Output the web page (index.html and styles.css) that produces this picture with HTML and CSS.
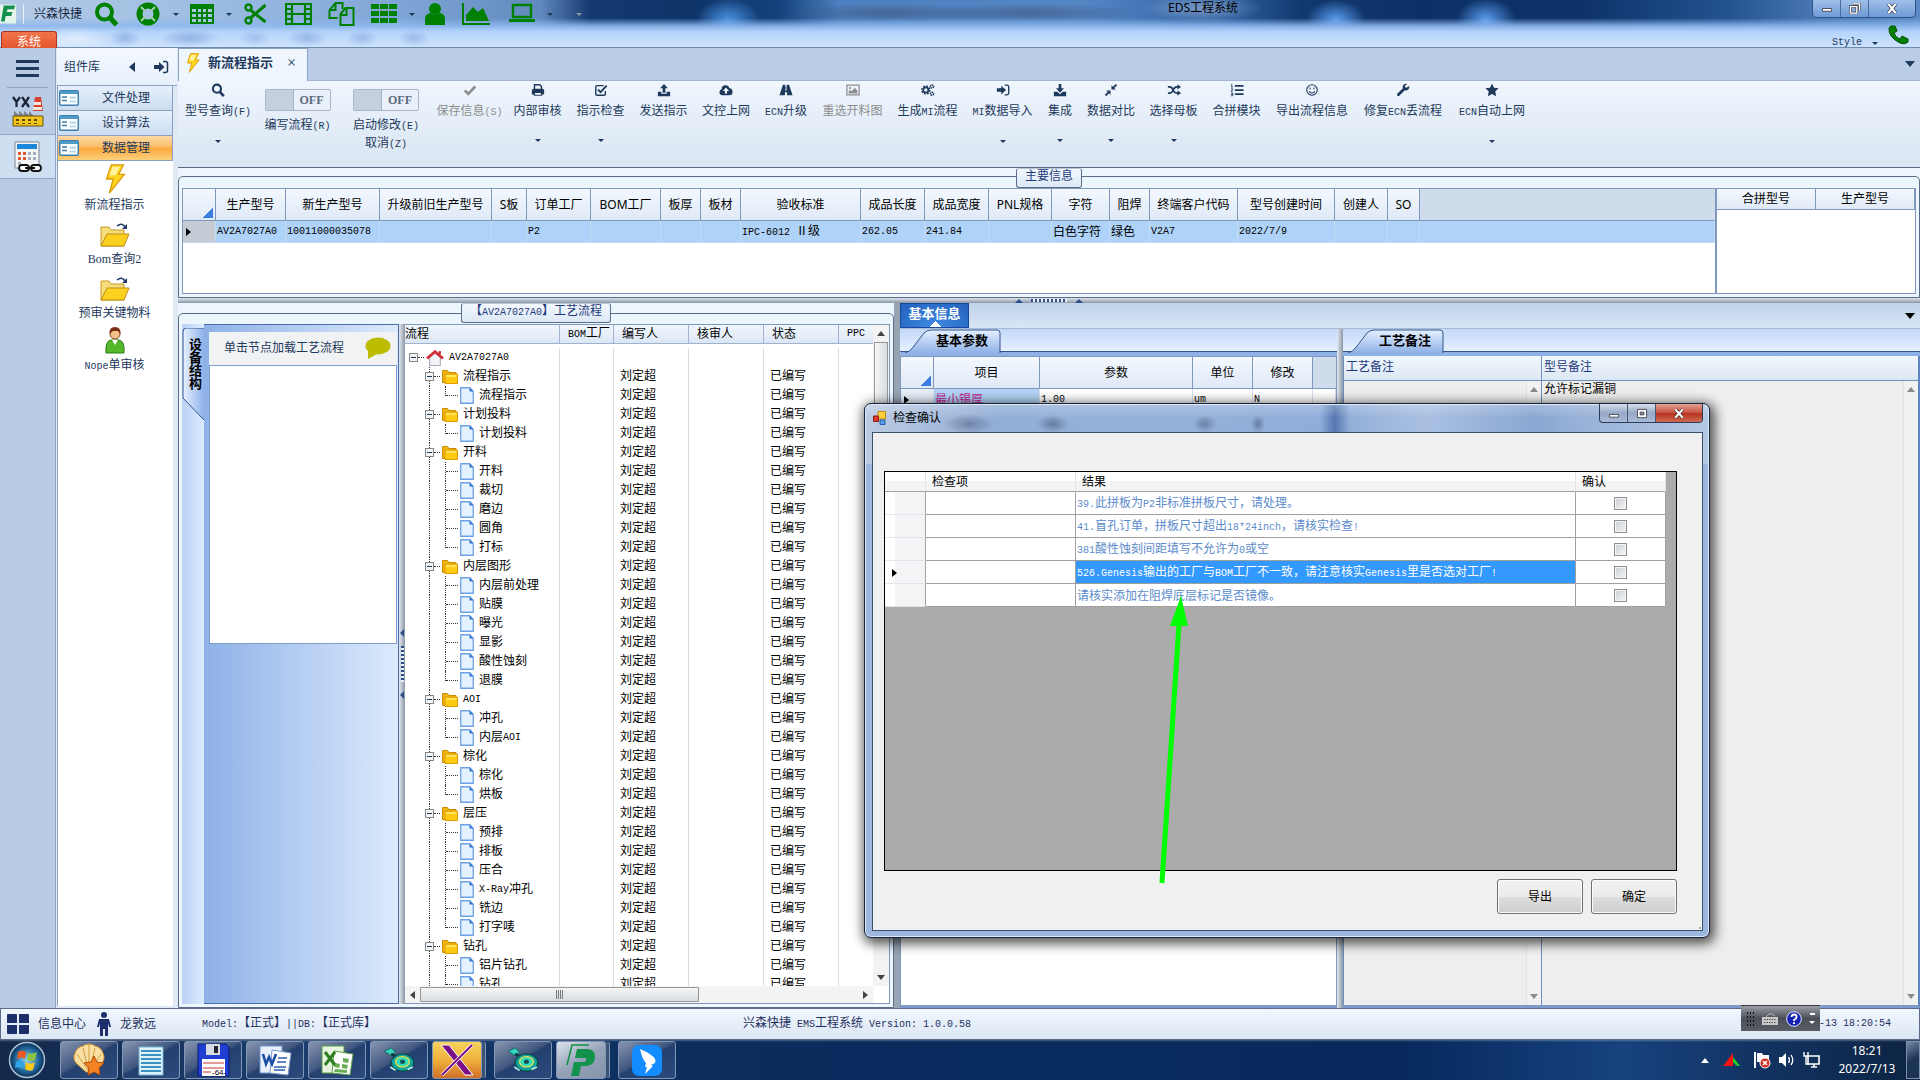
FILE: index.html
```html
<!DOCTYPE html>
<html lang="zh-CN">

<head>
  <meta charset="utf-8">
  <title>EDS工程系统</title>
  <link rel="stylesheet" href="styles.css">
</head>

<body>
  <!-- Icon shapes shared by the page -->
  <svg class="symbols" aria-hidden="true">
    <symbol id="i-search" viewBox="0 0 16 16"><circle cx="6.8" cy="6.5" r="4.6" fill="none" stroke="currentColor" stroke-width="2.4"/><path d="M10 10l4.6 5" stroke="currentColor" stroke-width="3"/></symbol>
    <symbol id="i-check" viewBox="0 0 16 16"><path d="M2 8.500l4 4L14 4" fill="none" stroke="currentColor" stroke-width="3"/></symbol>
    <symbol id="i-print" viewBox="0 0 16 16"><path d="M4 7V2h6l2 2v3" fill="none" stroke="currentColor" stroke-width="1.600"/><path d="M3 6.500h10q2 0 2 2V13h-3v-2H4v2H1V8.500q0-2 2-2z" fill="currentColor"/><path d="M4 10.800h8V14H4z" fill="#fff" stroke="currentColor" stroke-width="1.400"/></symbol>
    <symbol id="i-checksq" viewBox="0 0 16 16"><path d="M13 9v3.500q0 1.500-1.500 1.500h-8Q2 14 2 12.500v-8Q2 3 3.500 3H11" fill="none" stroke="currentColor" stroke-width="1.600"/><path d="M4.500 7.500l3 3L14.500 3" fill="none" stroke="currentColor" stroke-width="2.200"/></symbol>
    <symbol id="i-upload" viewBox="0 0 16 16"><path d="M8 1l4.500 5h-3v5h-3V6h-3z" fill="currentColor"/><path d="M1 10h4v2.200h6V10h4v5H1z" fill="currentColor"/></symbol>
    <symbol id="i-download" viewBox="0 0 16 16"><path d="M6.500 1h3v5h3L8 11 3.500 6h3z" fill="currentColor"/><path d="M1 10h4l3 2.800L11 10h4v5H1z" fill="currentColor"/></symbol>
    <symbol id="i-cloud" viewBox="0 0 16 16"><path d="M4 14Q.5 14 .5 10.500 .5 8 3 7.200 3 2.500 7.500 2.500q3.500 0 4.200 3.200Q15.500 6.500 15.500 10 15.500 14 12 14z" fill="currentColor"/><path d="M8 5l3.500 4H9.200v3H6.800V9H4.500z" fill="#f4f9fe"/></symbol>
    <symbol id="i-road" viewBox="0 0 16 16"><path d="M4.500 2h2.700v3h1.600V2h2.700L15.500 14H9.200v-3.500H6.800V14H.5z" fill="currentColor"/><path d="M7.300 6h1.400v2.500H7.300z" fill="#eef5fc"/></symbol>
    <symbol id="i-image" viewBox="0 0 16 16"><path d="M1 2.500h14v11H1z" fill="none" stroke="currentColor" stroke-width="1.400"/><circle cx="4.600" cy="5.800" r="1.300" fill="currentColor"/><path d="M3 12V9.500l2-1.500 1.500 1.500L10 5.500l3 3V12z" fill="currentColor"/></symbol>
    <symbol id="i-cogs" viewBox="0 0 16 16"><circle cx="5.500" cy="8" r="3" fill="none" stroke="currentColor" stroke-width="2"/><circle cx="5.500" cy="8" r="4.600" fill="none" stroke="currentColor" stroke-width="1.600" stroke-dasharray="2 1.600"/><circle cx="12.600" cy="4" r="1.800" fill="none" stroke="currentColor" stroke-width="1.600" stroke-dasharray="1.800 .6"/><circle cx="12.600" cy="12.300" r="1.800" fill="none" stroke="currentColor" stroke-width="1.600" stroke-dasharray="1.800 .6"/></symbol>
    <symbol id="i-signin" viewBox="0 0 16 16"><path d="M1 6h5V3l5.500 5L6 13v-3H1z" fill="currentColor"/><path d="M10 2.500h2.500Q14.500 2.500 14.500 4.500v7q0 2-2 2H10" fill="none" stroke="currentColor" stroke-width="1.500"/></symbol>
    <symbol id="i-compress" viewBox="0 0 16 16"><path d="M8.500 7.500v-5l1.700 1.700L13.500 1 15 2.500l-3.200 3.300L13.500 7.500zM7.500 8.500v5l-1.700-1.700L2.500 15 1 13.500l3.200-3.300L2.500 8.500z" fill="currentColor"/></symbol>
    <symbol id="i-random" viewBox="0 0 16 16"><path d="M1 4.500h2.500q2 0 3.500 3.500t4 3.500h1.500M1 11.500h2.500q2 0 3.500-3.500t4-3.500h1.500" fill="none" stroke="currentColor" stroke-width="1.900"/><path d="M12 1.500l4 3-4 3zM12 8.500l4 3-4 3z" fill="currentColor"/></symbol>
    <symbol id="i-list" viewBox="0 0 16 16"><path d="M5.500 3.200h10M5.500 8h10M5.500 12.800h10" stroke="currentColor" stroke-width="2"/><path d="M2 1v3.500M1 4.500h2.500M1 6.500h2v1.200L1 9.300h2.500M1 11.500h2.200v1.400H1.500h1.700v1.700H1" fill="none" stroke="currentColor" stroke-width=".9"/></symbol>
    <symbol id="i-smile" viewBox="0 0 16 16"><circle cx="8" cy="8" r="6" fill="none" stroke="currentColor" stroke-width="1.200"/><path d="M5.800 5v2.200M10.200 5v2.200M4.800 9.500q3.200 4 6.400 0" fill="none" stroke="currentColor" stroke-width="1.200"/></symbol>
    <symbol id="i-wrench" viewBox="0 0 16 16"><path d="M15 3.500L12 5.500 10.300 4.700 10.200 3 13 1.200Q9.500.2 8 2.800q-.8 1.600-.1 3.200L1.500 12.300Q.6 13.500 1.600 14.500q1.100 1 2.200.1L10 8.200q3 .9 4.600-1.400Q15.600 5.300 15 3.500z" fill="currentColor"/></symbol>
    <symbol id="i-star" viewBox="0 0 16 16"><path d="M8 .5l2.300 4.900 5.200.7-3.800 3.700 1 5.200L8 12.500 3.300 15l1-5.200L.5 6.100l5.200-.7z" fill="currentColor"/></symbol>
    <symbol id="i-bolt" viewBox="0 0 24 32"><path d="M8 1h13l-5 10h6L6 31l4-15H3z" fill="#ffd51f" stroke="#d99b0c" stroke-width="1.400"/><path d="M9.500 3h8l-5 9H6z" fill="#fff2a0"/></symbol>
    <symbol id="i-open" viewBox="0 0 30 26"><path d="M1 24V5h8l2 3h13v16z" fill="#f7dc7c" stroke="#c89a22"/><path d="M1 24L7 12h22l-5 12z" fill="#fbd01f" stroke="#c08f14"/><path d="M17 4q5-4 8 1" fill="none" stroke="#243b66" stroke-width="1.600"/><path d="M27 2v5h-5z" fill="#243b66"/></symbol>
    <symbol id="i-form" viewBox="0 0 20 16"><rect x=".75" y=".75" width="18.500" height="14.500" rx="1" fill="#fff" stroke="#3c7fae" stroke-width="1.500"/><path d="M1 1h18v3H1z" fill="#4f9bc8"/><path d="M3 7h5M3 10.500h5" stroke="#3c7fae" stroke-width="1.600"/><path d="M10.500 6.500h6.500v2.300h-6.500zM10.500 10.500h6.500v2h-6.500z" fill="#b9d9ea"/></symbol>
    <symbol id="i-folder" viewBox="0 0 16 15"><path d="M.5 13.500V1.500h5l1.500 2h7v10z" fill="#f0b410" stroke="#c98c07"/><path d="M3 5h12.500v9.500H3z" fill="#ffcb12" stroke="#e09a08"/><path d="M4 6h10.500v2H4z" fill="#ffe45c"/></symbol>
    <symbol id="i-doc" viewBox="0 0 14 17"><path d="M.75.75h9l3.500 3.500v12H.75z" fill="#e4f1ff" stroke="#6ea2e6" stroke-width="1.300"/><path d="M9.500.5l4 4h-4z" fill="#2f74cf"/></symbol>
    <symbol id="i-home" viewBox="0 0 16 15"><path d="M3 7l5-4.500L13 7v7.500H3z" fill="#f3f4f8" stroke="#a5a9b8"/><path d="M.5 8L8 1.500 15.500 8" fill="none" stroke="#d3303a" stroke-width="2.600"/><path d="M11.500 1h2v3h-2z" fill="#b5232c"/></symbol>
    <symbol id="i-person" viewBox="0 0 20 28"><path d="M1 27q-1-12 5-13h8q6 1 5 13z" fill="#55b82a" stroke="#2c7d12"/><path d="M7 14l3 5 3-5z" fill="#fff"/><circle cx="10" cy="8" r="5" fill="#f3c08c" stroke="#8b4a1f"/><path d="M4.500 8Q4 1 10 1t5.500 7L13 5H8z" fill="#7b2d14"/></symbol>
    <symbol id="i-moth" viewBox="0 0 36 30"><path d="M1 5l8-4 5 5-5 4z" fill="#35d6bd" stroke="#0a5b58"/><path d="M9 8l9 5" stroke="#134" stroke-width="3"/><ellipse cx="22" cy="18" rx="13" ry="10" fill="#14a39a" stroke="#0a4c4c" stroke-width="1.500"/><ellipse cx="22" cy="17" rx="8" ry="6" fill="#36dcb8" stroke="#e8e04e" stroke-width="1.500"/><ellipse cx="22" cy="17" rx="3" ry="2.500" fill="#10535a"/><path d="M8 23l6 4M28 26l6-3" stroke="#bfe9ee" stroke-width="2"/></symbol>
  </svg>

  <header class="titlebar">
    <div class="quick">
      <svg class="logo" viewBox="0 0 18 20"><path d="M0 0h17v20H0z" fill="#e4f3ea"/><path d="M4 1h12l-1 4H8L7 8h6l-1 4H6l-1 6H1z" fill="#12904e"/></svg>
      <span class="sep"></span>
      <span class="brand">兴森快捷</span>
      <svg class="q q1" viewBox="0 0 24 24"><circle cx="10" cy="10" r="7.500" fill="none" stroke="#008000" stroke-width="4"/><path d="M15 15l7 8" stroke="#008000" stroke-width="5"/></svg>
      <svg class="q q2" viewBox="0 0 26 24"><circle cx="13" cy="12" r="8.500" fill="none" stroke="#008000" stroke-width="6"/><path d="M6 5l4 4M20 5l-4 4M6 19l4-4M20 19l-4-4" stroke="#a8ceae" stroke-width="2"/></svg>
      <i class="caret"></i>
      <svg class="q q3" viewBox="0 0 24 24"><path d="M0 2h24v20H0z" fill="#008000"/><path d="M2 7h4v3H2zM8 7h3v3H8zM13 7h3v3h-3zM18 7h4v3h-4zM2 12h4v3H2zM8 12h3v3H8zM13 12h3v3h-3zM18 12h4v3h-4zM2 17h4v3H2zM8 17h3v3H8zM13 17h3v3h-3zM18 17h4v3h-4z" fill="#a9c8e4"/></svg>
      <i class="caret"></i>
      <svg class="q q4" viewBox="0 0 22 24"><path d="M6 8L21 20M6 16L21 3" stroke="#008000" stroke-width="3"/><circle cx="4" cy="5.500" r="3" fill="none" stroke="#008000" stroke-width="2.400"/><circle cx="4" cy="18.500" r="3" fill="none" stroke="#008000" stroke-width="2.400"/></svg>
      <svg class="q q5" viewBox="0 0 27 24"><path d="M1 2h25v20H1zM7 2v20M20 2v20M7 12h13M1 7h6M1 12h6M1 17h6M20 7h6M20 12h6M20 17h6" fill="none" stroke="#008000" stroke-width="2.200"/></svg>
      <svg class="q q6" viewBox="0 0 26 24"><path d="M9 16H1V8l6-7h7v6M7 1v7H1M12 23V12l5-6h8v17zM18 6v7h-6" fill="none" stroke="#008000" stroke-width="2"/></svg>
      <svg class="q q7" viewBox="0 0 26 24"><path d="M0 2h8v5H0zM9 2h8v5H9zM18 2h8v5h-8zM0 9h8v5H0zM9 9h8v5H9zM18 9h8v5h-8zM0 16h8v5H0zM9 16h8v5H9zM18 16h8v5h-8z" fill="#008000"/></svg>
      <i class="caret"></i>
      <svg class="q q8" viewBox="0 0 22 24"><circle cx="11" cy="7" r="6" fill="#008000"/><path d="M1 23V17q0-5 5-6 5 4 10 0 5 1 5 6v6z" fill="#008000"/></svg>
      <svg class="q q9" viewBox="0 0 29 24"><path d="M1 1v21h27" fill="none" stroke="#008000" stroke-width="2"/><path d="M4 19v-6l7-8 5 5 5-4 6 13z" fill="#008000"/></svg>
      <svg class="q q10" viewBox="0 0 26 24"><path d="M4 3h18v12H4z" fill="none" stroke="#008000" stroke-width="2.400"/><path d="M0 17h26v3H0z" fill="#008000"/></svg>
      <i class="caret"></i>
      <i class="caret more"></i>
    </div>
    <h1 class="app-title">EDS工程系统</h1>
    <div class="window-buttons">
      <button type="button" aria-label="最小化"><svg viewBox="0 0 12 12"><path d="M1 6h10v3H1z" fill="#fff" stroke="#445"/></svg></button>
      <button type="button" aria-label="还原"><svg viewBox="0 0 12 12"><path d="M4 1h7v7M1 4h7v7H1z" fill="none" stroke="#445" stroke-width="3"/><path d="M4 1h7v7M1 4h7v7H1z" fill="none" stroke="#fff" stroke-width="1.500"/></svg></button>
      <button type="button" class="wide" aria-label="关闭"><svg viewBox="0 0 12 12"><path d="M2 1l8 10M10 1L2 11" stroke="#445" stroke-width="4"/><path d="M2 1l8 10M10 1L2 11" stroke="#fff" stroke-width="2.400"/></svg></button>
    </div>
    <button type="button" class="system-tab">系统</button>
    <div class="style-menu">
      <span class="lat">Style</span><i class="caret"></i>
      <svg width="22" height="20" viewBox="0 0 22 20"><path d="M3 1l4 0 2 5-3 2q2 5 6 6l2-3 6 3v3q-3 3-8 1Q0 12 1 3z" fill="#008000" stroke="#024d02"/></svg>
    </div>
  </header>

  <div class="app">
    <nav class="rail">
      <button type="button" class="burger" aria-label="菜单"><i></i><i></i><i></i></button>
      <button type="button" class="rail-item active" aria-label="YX">
        <svg width="32" height="32" viewBox="0 0 32 32"><path d="M21 16l2-14h6l2 14z" fill="#d8402f"/><path d="M22 7h7v3h-7zM21 12h9v3h-9z" fill="#f4e6e0"/><path d="M2 22v-6l5 4v-4l5 4v-4l5 4v-4l4 4v2z" fill="#7a828e"/><path d="M1 21h30v10H1z" fill="#f2c31a" stroke="#6b5310"/><path d="M4 24h3v2H4zM10 24h3v2h-3zM16 24h3v2h-3zM22 24h3v2h-3zM4 28h3v1H4zM10 28h3v1h-3zM16 28h3v1h-3zM22 28h3v1h-3z" fill="#5d4706"/><path d="M1 2l3.500 5L8 2M4.500 7v5M10 2l7 10M17 2l-7 10" fill="none" stroke="#1a2233" stroke-width="2.200"/></svg>
      </button>
      <button type="button" class="rail-item" aria-label="计算">
        <svg width="30" height="32" viewBox="0 0 30 32"><path d="M2 1h24v26H2z" fill="#f4f5f7" stroke="#7d8695"/><path d="M4 3h20v5H4z" fill="#1d86d8"/><path d="M5 11h3v3H5zM10 11h3v3h-3zM5 16h3v3H5zM10 16h3v3h-3z" fill="#e2582b"/><path d="M15 11h3v3h-3zM20 11h3v3h-3zM15 16h3v3h-3zM20 16h3v3h-3zM5 21h3v3H5z" fill="#a7b0bf"/><rect x="6" y="24" width="10" height="6" rx="3" fill="#fff" stroke="#111" stroke-width="1.800"/><rect x="18" y="24" width="10" height="6" rx="3" fill="#fff" stroke="#111" stroke-width="1.800"/><path d="M12 27h10" stroke="#111" stroke-width="2"/></svg>
      </button>
    </nav>

    <aside class="library">
      <div class="library-head"><span>组件库</span><i class="back"></i><svg width="16" height="16"><use href="#i-signin"/></svg></div>
      <button type="button" class="cat"><svg width="20" height="16"><use href="#i-form"/></svg><span>文件处理</span></button>
      <button type="button" class="cat"><svg width="20" height="16"><use href="#i-form"/></svg><span>设计算法</span></button>
      <button type="button" class="cat on"><svg width="20" height="16"><use href="#i-form"/></svg><span>数据管理</span></button>
      <div class="library-list">
        <a href="#"><svg width="24" height="30"><use href="#i-bolt"/></svg>新流程指示</a>
        <a href="#"><svg width="30" height="26"><use href="#i-open"/></svg>Bom查询2</a>
        <a href="#"><svg width="30" height="26"><use href="#i-open"/></svg>预审关键物料</a>
        <a href="#"><svg width="22" height="28"><use href="#i-person"/></svg><span><span class="lat">Nope</span>单审核</span></a>
      </div>
    </aside>

    <main class="main">
      <div class="doc-tabs">
        <div class="doc-tab"><svg width="16" height="20"><use href="#i-bolt"/></svg><b>新流程指示</b><button type="button" aria-label="关闭">×</button></div>
        <i class="drop"></i>
      </div>

      <div class="toolbar">
        <button type="button" class="tool"><svg><use href="#i-search"/></svg><span>型号查询<span class="lat">(F)</span></span><i class="caret"></i></button>
        <label class="tool switch"><input type="checkbox"><span class="track">OFF</span><span>编写流程<span class="lat">(R)</span></span></label>
        <label class="tool switch"><input type="checkbox"><span class="track">OFF</span><span>启动修改<span class="lat">(E)</span></span><span>取消<span class="lat">(Z)</span></span></label>
        <button type="button" class="tool" disabled><svg><use href="#i-check"/></svg><span>保存信息<span class="lat">(S)</span></span></button>
        <button type="button" class="tool"><svg><use href="#i-print"/></svg><span>内部审核</span><i class="caret"></i></button>
        <button type="button" class="tool"><svg><use href="#i-checksq"/></svg><span>指示检查</span><i class="caret"></i></button>
        <button type="button" class="tool"><svg><use href="#i-upload"/></svg><span>发送指示</span></button>
        <button type="button" class="tool"><svg><use href="#i-cloud"/></svg><span>文控上网</span></button>
        <button type="button" class="tool"><svg><use href="#i-road"/></svg><span><span class="lat">ECN</span>升级</span></button>
        <button type="button" class="tool" disabled><svg><use href="#i-image"/></svg><span>重选开料图</span></button>
        <button type="button" class="tool"><svg><use href="#i-cogs"/></svg><span>生成<span class="lat">MI</span>流程</span></button>
        <button type="button" class="tool"><svg><use href="#i-signin"/></svg><span><span class="lat">MI</span>数据导入</span><i class="caret"></i></button>
        <button type="button" class="tool"><svg><use href="#i-download"/></svg><span>集成</span><i class="caret"></i></button>
        <button type="button" class="tool"><svg><use href="#i-compress"/></svg><span>数据对比</span><i class="caret"></i></button>
        <button type="button" class="tool"><svg><use href="#i-random"/></svg><span>选择母板</span><i class="caret"></i></button>
        <button type="button" class="tool"><svg><use href="#i-list"/></svg><span>合拼模块</span></button>
        <button type="button" class="tool"><svg><use href="#i-smile"/></svg><span>导出流程信息</span></button>
        <button type="button" class="tool"><svg><use href="#i-wrench"/></svg><span>修复<span class="lat">ECN</span>丢流程</span></button>
        <button type="button" class="tool"><svg><use href="#i-star"/></svg><span><span class="lat">ECN</span>自动上网</span><i class="caret"></i></button>
      </div>

      <section class="group info">
        <h2 class="group-label">主要信息</h2>
        <div class="group-box">
          <div class="info-left">
            <table class="grid">
              <colgroup><col class="w33"><col class="w70"><col class="w94"><col class="w112"><col class="w35"><col class="w64"><col class="w70"><col class="w40"><col class="w40"><col class="w120"><col class="w64"><col class="w64"><col class="w63"><col class="w58"><col class="w40"><col class="w88"><col class="w97"><col class="w53"><col class="w32"><col></colgroup>
              <thead>
                <tr><th class="corner"></th><th>生产型号</th><th>新生产型号</th><th>升级前旧生产型号</th><th>S板</th><th>订单工厂</th><th>BOM工厂</th><th>板厚</th><th>板材</th><th>验收标准</th><th>成品长度</th><th>成品宽度</th><th>PNL规格</th><th>字符</th><th>阻焊</th><th>终端客户代码</th><th>型号创建时间</th><th>创建人</th><th>SO</th><th class="rest"></th></tr>
              </thead>
              <tbody>
                <tr class="picked"><td class="mark"><i></i></td><td class="lat">AV2A7027A0</td><td class="lat">10011000035078</td><td></td><td></td><td class="lat">P2</td><td></td><td></td><td></td><td><span class="lat">IPC-6012 </span>Ⅱ级</td><td class="lat">262.05</td><td class="lat">241.84</td><td></td><td>白色字符</td><td>绿色</td><td class="lat">V2A7</td><td class="lat">2022/7/9</td><td></td><td></td><td></td></tr>
              </tbody>
            </table>
          </div>
          <div class="info-right">
            <table class="grid short">
              <thead><tr><th>合拼型号</th><th>生产型号</th></tr></thead>
            </table>
          </div>
        </div>
      </section>

      <div class="hsplit"><i class="up"></i><i class="dots"></i><i class="up"></i></div>

      <div class="lower">
        <section class="group process">
          <h2 class="group-label">【<span class="lat">AV2A7027A0</span>】工艺流程</h2>
          <div class="group-box">
            <div class="side-tab">
              <svg viewBox="0 0 22 94" preserveAspectRatio="none"><defs><linearGradient id="sideFill" x1="0" x2="1" y1="0" y2="0"><stop offset="0" stop-color="#e8f1ff"/><stop offset="1" stop-color="#8fb2e8"/></linearGradient></defs><path d="M22 0H4Q1 0 1 4v66l21 22" fill="url(#sideFill)" stroke="#33548f"/></svg>
              <b>设备结构</b>
            </div>
            <div class="device">
              <button type="button" class="hint">单击节点加载工艺流程<svg width="26" height="22" viewBox="0 0 26 22"><ellipse cx="13" cy="9" rx="12.500" ry="8.500" fill="#bcbc00"/><path d="M3 14l0 8 9-5z" fill="#bcbc00"/></svg></button>
              <div class="device-list"></div>
            </div>
            <div class="vsplit"><i class="left"></i><i class="dots"></i><i class="left"></i></div>
            <div class="tree">
              <div class="tree-view">
                <table>
                  <colgroup><col class="w155"><col class="w54"><col class="w75"><col class="w75"><col class="w75"><col></colgroup>
                  <thead><tr><th>流程</th><th><span class="lat">BOM</span>工厂</th><th>编写人</th><th>核审人</th><th>状态</th><th class="lat">PPC</th></tr></thead>
                  <tbody id="process-rows"></tbody>
                </table>
              </div>
              <div class="scroll-y"><i class="tri up"></i><i class="thumb"></i><i class="tri down"></i></div>
              <div class="scroll-x"><i class="tri prev"></i><i class="thumb"></i><i class="tri next"></i></div>
            </div>
          </div>
        </section>

        <section class="details">
          <div class="detail-tabs"><button type="button">基本信息</button><i class="drop"></i></div>
          <div class="detail-body">
            <div class="params">
              <div class="slant"><svg viewBox="0 0 96 24"><use href="#slant"/></svg><b>基本参数</b></div>
              <div class="sheet">
                <table class="grid">
                  <colgroup><col class="w33"><col class="w106"><col class="w153"><col class="w60"><col class="w60"><col></colgroup>
                  <thead><tr><th class="corner"></th><th>项目</th><th>参数</th><th>单位</th><th>修改</th><th class="rest"></th></tr></thead>
                  <tbody>
                    <tr><td class="mark"><i></i></td><td class="item">最小锡厚</td><td class="lat">1.00</td><td class="lat unit">um</td><td class="lat">N</td><td></td></tr>
                  </tbody>
                </table>
              </div>
            </div>
            <div class="vsplit thin"></div>
            <div class="notes">
              <div class="slant"><svg viewBox="0 0 96 24"><defs><linearGradient id="tabFill" x1="0" x2="0" y1="0" y2="1"><stop offset="0" stop-color="#e6f0ff"/><stop offset="1" stop-color="#8eb1e7"/></linearGradient><path id="slant" d="M0 24Q5 23 9 17L19 4Q22 1 26 1H92Q95 1 95 4V24" fill="url(#tabFill)" stroke="#33548f"/></defs><use href="#slant"/></svg><b>工艺备注</b></div>
              <div class="note-grid">
                <div class="note"><label for="note-process">工艺备注</label><div class="note-body"><textarea id="note-process"></textarea><div class="scroll-y off"><i class="tri up"></i><i class="tri down"></i></div></div></div>
                <div class="note"><label for="note-model">型号备注</label><div class="note-body"><textarea id="note-model">允许标记漏铜</textarea><div class="scroll-y off"><i class="tri up"></i><i class="tri down"></i></div></div></div>
              </div>
            </div>
          </div>
        </section>
      </div>
    </main>
  </div>

  <footer class="statusbar">
    <svg width="22" height="20" viewBox="0 0 22 20"><path d="M0 1q0-1 1-1h8q1 0 1 1v8H0zM12 0h9q1 0 1 1v8H12zM0 11h10v9H1q-1 0-1-1zM12 11h10v8q0 1-1 1h-9z" fill="#1c2f6b"/></svg>
    <span class="center-name">信息中心</span>
    <svg width="16" height="24" viewBox="0 0 16 24"><circle cx="8" cy="3" r="3" fill="#1c2f6b"/><path d="M3 7h10l2 8h-2l-1-4v13H9v-7H7v7H4V11l-1 4H1z" fill="#1c2f6b"/></svg>
    <span class="user">龙敦远</span>
    <span class="model"><span class="lat">Model:</span>【正式】<span class="lat">||DB:</span>【正式库】</span>
    <span class="version">兴森快捷<span class="lat"> EMS</span>工程系统<span class="lat"> Version: 1.0.0.58</span></span>
    <span class="clock lat">-13 18:20:54</span>
  </footer>

  <div class="taskbar">
    <button type="button" class="orb" aria-label="开始"><svg width="40" height="38" viewBox="0 0 40 38"><defs><radialGradient id="orb"><stop offset="0" stop-color="#8ed8f5"/><stop offset=".7" stop-color="#1e6296"/><stop offset="1" stop-color="#0b2c50"/></radialGradient></defs><circle cx="20" cy="19" r="17.500" fill="url(#orb)" stroke="#a8bfd2" stroke-width="1.500"/><path d="M11 11q4-3 8 0l-1 7q-4-3-8 0z" fill="#ee5a24"/><path d="M21 12q4 2 9-1l-2 8q-4 2-8 0z" fill="#8cc63e"/><path d="M9 21q4-3 8 0l-1 7q-4-3-8-1z" fill="#2fa4e7"/><path d="M19 21q4 3 9 0l-2 8q-4 2-8-1z" fill="#fbc91e"/></svg></button>
    <button type="button" class="task" aria-label="贝壳"><svg viewBox="0 0 36 34"><path d="M18 1q4 0 6 2 6 1 8 7 3 6-2 11l-9 8h-6l-9-8Q1 16 4 10q2-6 8-7 2-2 6-2z" fill="#f8dfa4" stroke="#c98b2b"/><path d="M18 29L6 11M18 29L12 5M18 29V2M18 29L24 5M18 29l12-18" stroke="#d79b3d"/><path d="M23 13l3 6 7 1-5 5 1 7-6-3-6 3 1-7-5-5 7-1z" fill="#f28222" stroke="#b24d0a"/></svg></button>
    <button type="button" class="task" aria-label="记事本"><svg viewBox="0 0 36 34"><path d="M6 4h24v28H6z" fill="#dff2fb" stroke="#6fb4d4"/><path d="M8 8h20M8 12h20M8 16h20M8 20h20M8 24h20M8 28h20" stroke="#3d94c4" stroke-width="2"/></svg></button>
    <button type="button" class="task" aria-label="TC"><svg viewBox="0 0 36 34"><path d="M3 1h28l3 3v29H3z" fill="#1f3fd0" stroke="#0a1b77"/><path d="M11 1h14v11H11z" fill="#d7dbe4"/><path d="M19 3h4v7h-4z" fill="#223"/><path d="M7 16h23v17H7z" fill="#fff"/><path d="M8 20h21M8 25h21M8 29h8" stroke="#c33"/><text x="17" y="32" font-size="8" font-family="Liberation Sans">-64-</text></svg></button>
    <button type="button" class="task" aria-label="Word"><svg viewBox="0 0 36 34"><path d="M3 3h22v27H3z" fill="#e8effa" stroke="#6f94cf"/><path d="M15 7l19 3-3 22-18-2z" fill="#fff" stroke="#7d9ccc"/><path d="M6 11l3 10 3-7 3 7 4-10" fill="none" stroke="#1b4fa4" stroke-width="2.600"/><path d="M21 15h9M20 19h9M17 24h12M17 27h11" stroke="#2b5fae" stroke-width="1.500"/></svg></button>
    <button type="button" class="task" aria-label="Excel"><svg viewBox="0 0 36 34"><path d="M3 3h22v27H3z" fill="#e7f4e2" stroke="#5ba045"/><path d="M15 8l19 3-3 21-18-2z" fill="#fff" stroke="#5ba045"/><path d="M16 20l5 1-1 4-5-1zM23 21l6 1-1 4-5-1zM24 15l6 1-1 4-5-1zM16 26l12 1v3l-13-1z" fill="#69ad55"/><path d="M6 9l10 13M16 9L6 22" stroke="#2c7d1f" stroke-width="3"/></svg></button>
    <button type="button" class="task small" aria-label="Genesis"><svg><use href="#i-moth"/></svg></button>
    <button type="button" class="task gold stack" aria-label="X"><svg viewBox="0 0 36 34"><path d="M2 2h8l24 30h-8z" fill="#7b0f86" stroke="#fff"/><path d="M33 2L3 32" stroke="#fff" stroke-width="3.500"/><path d="M33 2L3 32" stroke="#7b0f86" stroke-width="2"/></svg></button>
    <button type="button" class="task small" aria-label="Genesis"><svg><use href="#i-moth"/></svg></button>
    <button type="button" class="task light stack" aria-label="EDS"><svg viewBox="0 0 36 34"><path d="M4 22L9 2h17" fill="none" stroke="#0f8f46" stroke-width="1.500"/><path d="M14 6h11q8 1 7 9-1 8-10 8h-4l-2 10H8l3-14h11q2-2 1-4H12z" fill="#12924a"/></svg></button>
    <button type="button" class="task" aria-label="飞鸟"><svg viewBox="0 0 36 34"><rect x="3" y="2" width="30" height="31" rx="7" fill="#128cff"/><path d="M11 6q12 5 15 10 1 2 0 4l-4 2 2 1-8 8 2-7h-2l1-4q-4-4-6-14z" fill="#fff"/></svg></button>

    <div class="tray">
      <i class="tri up"></i>
      <svg width="18" height="16" viewBox="0 0 18 16"><path d="M0 14L10 1v13z" fill="#f01414"/><path d="M10 5l7 9h-3l-4-4z" fill="#1ed22a"/></svg>
      <svg width="18" height="18" viewBox="0 0 18 18"><path d="M2 1v16" stroke="#fff" stroke-width="2"/><path d="M4 2h5l1 2h6v7H4z" fill="#fff"/><circle cx="12" cy="12" r="5" fill="#d32a22" stroke="#fff"/><path d="M10 10l4 4M14 10l-4 4" stroke="#fff" stroke-width="1.600"/></svg>
      <svg width="18" height="16" viewBox="0 0 18 16"><path d="M1 5h3l4-4v14l-4-4H1z" fill="#fff"/><path d="M10.500 5q2 3 0 6M13 3q3.500 5 0 10" fill="none" stroke="#fff" stroke-width="1.300"/></svg>
      <svg width="18" height="18" viewBox="0 0 18 18"><path d="M5 5h11v8H5zM8 16h6M11 13v3" fill="none" stroke="#fff" stroke-width="1.600"/><path d="M1 1v4h4V1M3 5v8h3" fill="none" stroke="#fff" stroke-width="1.400"/></svg>
      <div class="tray-clock">18:21<br>2022/7/13</div>
      <button type="button" class="peek" aria-label="显示桌面"></button>
    </div>
  </div>

  <!-- Input method bar floating above the status bar -->
  <div class="ime">
    <i class="grip"></i>
    <svg width="18" height="14" viewBox="0 0 18 14"><path d="M5 5q4-6 9-1" fill="none" stroke="#bbb"/><path d="M1 5h16v8H1z" fill="#c9c9c9"/><path d="M3 7.500h12M3 10.500h12" stroke="#555" stroke-dasharray="1.500 1"/></svg>
    <svg width="16" height="16" viewBox="0 0 16 16"><circle cx="8" cy="8" r="7.300" fill="#1422b4" stroke="#dfe3ff"/><path d="M5.500 6q.2-2.500 2.600-2.500T10.600 5.800Q10.600 7.500 8 9v1" fill="none" stroke="#fff" stroke-width="1.900"/><path d="M7 11.200h2v1.800H7z" fill="#fff"/></svg>
    <span class="ime-menu"><i></i><i class="caret"></i></span>
  </div>

  <!-- Check dialog -->
  <div class="dialog" role="dialog" aria-labelledby="dialog-title">
    <div class="dialog-bar">
      <svg width="14" height="14" viewBox="0 0 14 14"><path d="M5 .5h7.500V8H5z" fill="#ffce3c" stroke="#b98a0b"/><path d="M.5 5h5v5.500h-5z" fill="#e03a2a" stroke="#8c1a10"/><path d="M7 9h5v4.500H7z" fill="#5a9af0" stroke="#2b5cab"/></svg>
      <span id="dialog-title">检查确认</span>
      <div class="dialog-buttons">
        <button type="button" aria-label="最小化"><svg viewBox="0 0 12 12"><path d="M1 7h10v3H1z" fill="#fff" stroke="#445"/></svg></button>
        <button type="button" aria-label="最大化"><svg viewBox="0 0 12 12"><path d="M1 1.500h10v9H1z" fill="#fff" stroke="#445"/><path d="M4 4.500h4v3H4z" fill="#889" stroke="#445"/></svg></button>
        <button type="button" class="close" aria-label="关闭"><svg viewBox="0 0 12 12"><path d="M2 1.500l8 9M10 1.500l-8 9" stroke="#533" stroke-width="4"/><path d="M2 1.500l8 9M10 1.500l-8 9" stroke="#fff" stroke-width="2.400"/></svg></button>
      </div>
    </div>
    <div class="dialog-client">
      <div class="check-area">
        <table class="checks">
          <colgroup><col class="w41"><col class="w150"><col class="w500"><col class="w90"></colgroup>
          <thead><tr><th></th><th>检查项</th><th>结果</th><th>确认</th></tr></thead>
          <tbody>
            <tr><td class="head"></td><td></td><td><span class="lat">39.</span>此拼板为<span class="lat">P2</span>非标准拼板尺寸，请处理。</td><td><input type="checkbox" aria-label="确认 39"></td></tr>
            <tr><td class="head"></td><td></td><td><span class="lat">41.</span>盲孔订单，拼板尺寸超出<span class="lat">18*24inch</span>，请核实检查<span class="lat">!</span></td><td><input type="checkbox" aria-label="确认 41"></td></tr>
            <tr><td class="head"></td><td></td><td><span class="lat">381</span>酸性蚀刻间距填写不允许为<span class="lat">0</span>或空</td><td><input type="checkbox" aria-label="确认 381"></td></tr>
            <tr><td class="head"><i></i></td><td></td><td class="sel"><span class="lat">526.Genesis</span>输出的工厂与<span class="lat">BOM</span>工厂不一致，请注意核实<span class="lat">Genesis</span>里是否选对工厂<span class="lat">!</span></td><td><input type="checkbox" aria-label="确认 526"></td></tr>
            <tr><td class="head"></td><td></td><td>请核实添加在阻焊底层标记是否镜像。</td><td><input type="checkbox" aria-label="确认镜像"></td></tr>
          </tbody>
        </table>
      </div>
      <div class="dialog-actions">
        <button type="button">导出</button>
        <button type="button">确定</button>
      </div>
    </div>
    <svg class="pointer" viewBox="0 0 40 290"><path d="M11 287L28 28" stroke="#00ff00" stroke-width="5"/><path d="M30 0L37 30H19z" fill="#00ff00"/></svg>
  </div>

  <script>
    // Process groups and the steps below each one
    const groups = [
      ['流程指示', ['流程指示']],
      ['计划投料', ['计划投料']],
      ['开料', ['开料', '裁切', '磨边', '圆角', '打标']],
      ['内层图形', ['内层前处理', '贴膜', '曝光', '显影', '酸性蚀刻', '退膜']],
      ['AOI', ['冲孔', '内层AOI']],
      ['棕化', ['棕化', '烘板']],
      ['层压', ['预排', '排板', '压合', 'X-Ray冲孔', '铣边', '打字唛']],
      ['钻孔', ['铝片钻孔', '钻孔']]
    ];

    const body = document.getElementById('process-rows');

    // Latin letters are set in the fixed width face
    function mixed(text) {
      return text.replace(/[\w-]+/g, '<span class="lat">$&</span>');
    }

    function addRow(nodeClass, inner, author, state) {
      const row = document.createElement('tr');
      row.innerHTML = `
        <td><div class="node ${nodeClass}">${inner}</div></td>
        <td></td><td>${author}</td><td></td><td>${state}</td><td></td>`;
      body.appendChild(row);
    }

    addRow('root', '<i class="toggle"></i><i class="dash"></i><svg width="18" height="16"><use href="#i-home"/></svg>' + mixed('AV2A7027A0'), '', '');
    groups.forEach(([name, steps]) => {
      addRow('branch', `<i class="line"></i><i class="toggle"></i><i class="dash"></i><svg width="16" height="15"><use href="#i-folder"/></svg>${mixed(name)}`, '刘定超', '已编写');
      steps.forEach((step, n) => {
        const end = n === steps.length - 1 ? 'end' : '';
        addRow('leaf', `<i class="line"></i><i class="line sub ${end}"></i><i class="dash"></i><svg width="14" height="17"><use href="#i-doc"/></svg>${mixed(step)}`, '刘定超', '已编写');
      });
    });
  </script>
</body>

</html>
```
FILE: styles.css
```css
* {
  box-sizing: border-box;
}

body {
  margin: 0;
  height: 100vh;
  display: flex;
  flex-direction: column;
  overflow: hidden;
  font-family: "Liberation Serif", "Noto Sans CJK SC", serif;
  font-size: 12px;
  line-height: 16px;
  color: #1e395b;
  background: #bfd0e8;
}

button {
  font: inherit;
  color: inherit;
  margin: 0;
  padding: 0;
  border: 0;
  background: none;
}

h1,
h2 {
  margin: 0;
  font-size: 12px;
  font-weight: normal;
}

a {
  color: inherit;
  text-decoration: none;
}

svg {
  display: block;
  flex: none;
}

i {
  display: block;
  flex: none;
}

table {
  border-collapse: separate;
  border-spacing: 0;
  table-layout: fixed;
  width: 100%;
}

.symbols {
  position: absolute;
  width: 0;
  height: 0;
}

/* Fixed width latin text, half as wide as a Chinese character */
.lat {
  font-family: "Liberation Mono", "Noto Sans CJK SC", monospace;
  font-size: 10px;
}

.caret {
  width: 0;
  height: 0;
  border: 3px solid transparent;
  border-top-color: #1e395b;
  border-bottom: 0;
}

.drop {
  width: 0;
  height: 0;
  border: 5px solid transparent;
  border-top: 6px solid #1e395b;
  border-bottom: 0;
}

/* Column widths */
.w32 { width: 32px; }
.w33 { width: 33px; }
.w35 { width: 35px; }
.w40 { width: 40px; }
.w41 { width: 41px; }
.w53 { width: 53px; }
.w54 { width: 54px; }
.w58 { width: 58px; }
.w60 { width: 60px; }
.w63 { width: 63px; }
.w64 { width: 64px; }
.w70 { width: 70px; }
.w75 { width: 75px; }
.w88 { width: 88px; }
.w90 { width: 90px; }
.w94 { width: 94px; }
.w97 { width: 97px; }
.w106 { width: 106px; }
.w112 { width: 112px; }
.w120 { width: 120px; }
.w150 { width: 150px; }
.w153 { width: 153px; }
.w155 { width: 155px; }
.w500 { width: 500px; }

/* Title bar */
.titlebar {
  flex: none;
  height: 48px;
  display: grid;
  grid-template-columns: 1168px 1fr auto;
  grid-template-rows: 28px 20px;
  border-bottom: 1px solid #6f8bb0;
  background:
    radial-gradient(ellipse 40px 12px at 75px 39px, rgba(255, 255, 255, .5), transparent),
    radial-gradient(ellipse 16px 9px at 125px 38px, rgba(90, 130, 200, .4), transparent),
    radial-gradient(ellipse 30px 9px at 190px 38px, rgba(90, 130, 200, .45), transparent),
    radial-gradient(ellipse 16px 9px at 255px 38px, rgba(90, 130, 200, .3), transparent),
    radial-gradient(ellipse 20px 9px at 307px 38px, rgba(90, 130, 200, .4), transparent),
    radial-gradient(ellipse 16px 9px at 362px 38px, rgba(90, 130, 200, .35), transparent),
    radial-gradient(ellipse 16px 9px at 414px 38px, rgba(90, 130, 200, .35), transparent),
    linear-gradient(transparent 18px, rgba(142, 184, 238, .9) 26px, #b5d4fb 32px, #cde2fb),
    radial-gradient(ellipse 32px 22px at 728px 20px, #4b92e4, transparent),
    radial-gradient(ellipse 30px 20px at 1336px 20px, #5b9df0, transparent),
    radial-gradient(ellipse 30px 22px at 1486px 20px, #5b9df0, transparent),
    radial-gradient(ellipse 60px 14px at 1203px 8px, rgba(170, 190, 220, .55), transparent),
    radial-gradient(ellipse 110px 10px at 890px 13px, rgba(60, 75, 105, .5), transparent),
    radial-gradient(ellipse 110px 10px at 1030px 13px, rgba(60, 75, 105, .5), transparent),
    linear-gradient(90deg, #b4cbe6, #9dbde2 200px, #7fa5d6 400px, #6289bd 540px, #13396f 590px, #0e3468 690px, #14427d 780px, #4d80c0 840px, #5586c6 1080px, #2f5f9e 1230px, #12396f 1300px, #0d3166 1420px, #0d3268 1580px, #235391 1730px, #4b79b6 1820px, #5b88c6);
}

.quick {
  display: flex;
  align-items: center;
}

.logo {
  width: 17px;
  height: 20px;
}

.sep {
  width: 1px;
  height: 20px;
  margin: 0 10px 0 6px;
  background: #e7f0fa;
}

.brand {
  width: 60px;
  color: #14263f;
}

.q {
  height: 24px;
  margin-right: 16px;
}

.q1 { width: 25px; }
.q2 { width: 26px; margin-right: 12px; }
.q3 { width: 24px; margin: 0 12px 0 11px; }
.q4 { width: 23px; margin-left: 12px; margin-right: 18px; }
.q5 { width: 27px; }
.q6 { width: 27px; }
.q7 { width: 26px; margin-right: 12px; }
.q8 { width: 22px; margin-left: 9px; }
.q9 { width: 29px; margin-right: 18px; }
.q10 { width: 26px; margin-right: 12px; }

.more {
  margin-left: 23px;
  border-top-color: #8a97a8;
}

.app-title {
  font-family: "Noto Sans", "Noto Sans CJK SC", sans-serif;
  color: #000;
}

.window-buttons {
  display: flex;
  height: 18px;
  margin-right: 4px;
  border: 1px solid #32527f;
  border-top: 0;
  border-radius: 0 0 5px 5px;
  background: linear-gradient(#9fc0ea, #6f9ad4);
}

.window-buttons button {
  width: 28px;
  display: flex;
  align-items: center;
  justify-content: center;
  border-right: 1px solid #4b6c9d;
}

.window-buttons .wide {
  width: 46px;
  border: 0;
}

.window-buttons svg,
.dialog-buttons svg {
  width: 12px;
  height: 11px;
}

.system-tab {
  width: 56px;
  height: 17px;
  margin: 3px 0 0 1px;
  overflow: hidden;
  line-height: 20px;
  color: #fff;
  border: 1px solid #a8341a;
  border-bottom: 0;
  border-radius: 3px 3px 0 0;
  background: linear-gradient(#f2744c, #e4572e);
}

.style-menu {
  grid-column: 2 / 4;
  display: flex;
  justify-content: flex-end;
  align-items: flex-end;
  gap: 10px;
  padding-right: 10px;
}

.style-menu .caret {
  margin-bottom: 3px;
}

.style-menu svg {
  margin-bottom: 3px;
}

.style-menu .lat {
  line-height: 10px;
}

/* Application area */
.app {
  flex: 1;
  min-height: 0;
  display: flex;
}

.rail {
  width: 56px;
  flex: none;
  display: flex;
  flex-direction: column;
  background: #b8cce6;
  border-right: 1px solid #8ea4c4;
}

.burger {
  height: 40px;
  margin: 0 7px;
  padding: 5px 9px 0;
  border-bottom: 1px solid #8ea4c4;
}

.burger i {
  height: 3px;
  margin-bottom: 4px;
  background: #1e395b;
}

.rail-item {
  height: 44px;
  display: flex;
  align-items: center;
  justify-content: center;
  border-bottom: 1px solid #93a8c8;
}

.rail-item.active {
  height: 47px;
}

.rail-item:last-child {
  background: #cfdff2;
}

.library {
  width: 122px;
  flex: none;
  display: flex;
  flex-direction: column;
  padding: 0 5px 2px 1px;
  background: #dfe9f6;
}

.library-head {
  height: 38px;
  display: flex;
  align-items: center;
  padding-left: 7px;
  margin-right: -4px;
  background: linear-gradient(#f4f9ff, #e6f0fb);
  border-bottom: 1px solid #8ea4c4;
}

.back {
  margin: 0 18px 0 29px;
  border: 5px solid transparent;
  border-right: 6px solid #1e395b;
  border-left: 0;
}

.cat {
  height: 25px;
  display: flex;
  align-items: center;
  padding-left: 1px;
  gap: 23px;
  border: 1px solid #8ba0bc;
  border-top: 0;
  background: linear-gradient(#e6f0fb, #cbdcf0);
}

.cat.on {
  background: linear-gradient(#fdd9a5, #fbbd6a 45%, #f9a83c 50%, #fdd07a);
}

.library-list {
  flex: 1;
  padding-right: 2px;
  background: #fff;
  border-left: 1px solid #8ba0bc;
}

.library-list a {
  height: 54px;
  display: flex;
  flex-direction: column;
  justify-content: flex-end;
  align-items: center;
  gap: 3px;
  padding-bottom: 2px;
}

/* Main area */
.main {
  flex: 1;
  min-width: 0;
  display: flex;
  flex-direction: column;
}

.doc-tabs {
  flex: none;
  height: 33px;
  display: flex;
  align-items: center;
  justify-content: space-between;
  padding-right: 5px;
  background: #bacde6;
  border-bottom: 1px solid #a3b6d0;
}

.doc-tab {
  width: 130px;
  height: 33px;
  display: flex;
  align-items: center;
  gap: 7px;
  padding: 0 0 3px 6px;
  white-space: nowrap;
  background: #eff6fd;
  border: 1px solid #8ea4c4;
  border-bottom: 0;
}

.doc-tab b {
  font-size: 13px;
}

.doc-tab button {
  margin-left: 7px;
  font-size: 16px;
}

.toolbar {
  flex: none;
  height: 87px;
  display: grid;
  grid-template-columns: 76px 83px 94px 73px 63px 63px 63px 62px 58px 75px 75px 75px 40px 62px 63px 63px 88px 94px 84px;
  padding: 2px 0 0 2px;
  background: linear-gradient(#eff6fd, #d9e5f3);
  border-bottom: 1px solid #5a6c88;
}

.tool {
  display: flex;
  flex-direction: column;
  align-items: center;
  white-space: nowrap;
  line-height: 17px;
}

.tool svg {
  width: 14px;
  height: 14px;
  margin-bottom: 6px;
}

.tool .caret {
  margin-top: 19px;
}

.tool:disabled {
  color: #8d8d8d;
}

.switch {
  position: relative;
}

.switch input {
  position: absolute;
  opacity: 0;
}

.track {
  width: 66px;
  height: 22px;
  margin: 6px 0 6px;
  padding-left: 28px;
  text-align: center;
  font-weight: bold;
  font-size: 12px;
  line-height: 20px;
  color: #5b6b80;
  border: 1px solid #a9b6c6;
  border-radius: 2px;
  background: linear-gradient(90deg, #c5d0df 27px, #a9b6c6 27px, #a9b6c6 28px, #e8f0f9 28px);
}

.group {
  position: relative;
  display: flex;
  background: #edf5fd;
}

.group-label {
  position: absolute;
  top: 0;
  left: 50%;
  transform: translateX(-50%);
  height: 20px;
  padding: 0 8px;
  line-height: 15px;
  white-space: nowrap;
  color: #1f3a7a;
  border: 1px solid #5a6c88;
  border-top-color: #b9c6d8;
  border-radius: 3px;
  background: linear-gradient(#f2f8fe, #dce8f5);
}

.group-box {
  flex: 1;
  min-width: 0;
  display: flex;
  border: 1px solid #5a6c88;
  border-radius: 5px 5px 0 0;
  padding: 11px 3px 3px;
}

.info {
  flex: none;
  height: 130px;
  padding-top: 8px;
}

.info-left {
  flex: 1;
  background: #fff;
  border: 1px solid #8098bd;
}

.info-right {
  width: 200px;
  background: #fff;
  border: 1px solid #8098bd;
}

.grid th {
  height: 32px;
  padding: 0;
  font-family: "Noto Sans", "Noto Sans CJK SC", sans-serif;
  font-weight: normal;
  white-space: nowrap;
  color: #000;
  border-right: 1px solid #8098bd;
  border-bottom: 1px solid #8098bd;
  background: linear-gradient(#f3f8fe, #dfe9f6);
}

.grid.short th {
  height: 21px;
}

.grid .rest {
  border-right: 0;
  background: #cfdcec;
}

.grid .corner {
  background:
    linear-gradient(135deg, transparent 50%, #3d7ce0 50%) right 2px bottom 2px / 11px 11px no-repeat,
    linear-gradient(#f3f8fe, #dfe9f6);
}

.grid td {
  height: 22px;
  padding: 1px 1px 0;
  white-space: nowrap;
  overflow: hidden;
  color: #000;
  border-right: 1px solid #c3dbf3;
  border-bottom: 1px solid #c3dbf3;
}

.picked td {
  background: #afd3f8;
}

.grid .mark {
  background: #c5ccd6;
  padding-left: 3px;
}

.mark i,
.head i {
  border: 4px solid transparent;
  border-left: 5px solid #000;
  border-right: 0;
}

.grid .item {
  color: #c0188e;
  background: #b3d3f5;
}

.hsplit {
  flex: none;
  height: 5px;
  display: flex;
  justify-content: center;
  align-items: center;
  gap: 8px;
  background: linear-gradient(#dfe4ea, #8b97a6);
}

.hsplit .up {
  border: 4px solid transparent;
  border-bottom: 4px solid #2d4f8a;
  border-top: 0;
}

.hsplit .dots {
  width: 36px;
  height: 3px;
  background: repeating-linear-gradient(90deg, #2d4f8a 0 2px, #eef2f7 2px 4px);
}

.lower {
  flex: 1;
  min-height: 0;
  display: flex;
}

.process {
  width: 716px;
  flex: none;
  padding-top: 10px;
}

.process .group-box {
  padding-top: 10px;
}

.side-tab {
  position: relative;
  width: 22px;
  background: linear-gradient(90deg, #b9d2f6, #dceaff);
}

.side-tab svg {
  width: 22px;
  height: 94px;
  margin-top: 4px;
}

.side-tab b {
  position: absolute;
  top: 14px;
  left: 4px;
  writing-mode: vertical-rl;
  font-size: 13px;
  color: #000;
}

.device {
  width: 195px;
  flex: none;
  display: flex;
  flex-direction: column;
  padding: 7px 1px 0 5px;
  border: 1px solid #4a6cae;
  border-left: 0;
  background: linear-gradient(90deg, #8eb1e7, #dceafd);
}

.hint {
  height: 33px;
  display: flex;
  align-items: center;
  justify-content: space-between;
  padding: 0 6px 2px 15px;
  background: #f1f2f4;
}

.device-list {
  height: 279px;
  background: #fff;
  border: 1px solid #7f9ccb;
}

.vsplit {
  width: 6px;
  flex: none;
  display: flex;
  flex-direction: column;
  justify-content: center;
  align-items: center;
  gap: 9px;
  background: linear-gradient(90deg, #e3e8ee, #8b97a6);
}

.vsplit .left {
  border: 4px solid transparent;
  border-right: 4px solid #2d4f8a;
  border-left: 0;
}

.vsplit .dots {
  width: 3px;
  height: 36px;
  background: repeating-linear-gradient(#2d4f8a 0 2px, #eef2f7 2px 4px);
}

/* Process tree */
.tree {
  flex: 1;
  min-width: 0;
  display: grid;
  grid-template-columns: 1fr 16px;
  grid-template-rows: 1fr 17px;
  background: #fff;
  border: 1px solid #8098bd;
  border-left: 0;
}

.tree-view {
  overflow: hidden;
  height: 0;
  min-height: 100%;
}

.tree th {
  height: 18px;
  padding: 0 0 0 8px;
  font-weight: normal;
  text-align: left;
  color: #000;
  white-space: nowrap;
  border-right: 1px solid #9fb3d0;
  border-bottom: 1px solid #9fb3d0;
  background: linear-gradient(#f0f6fd, #dce7f4);
}

.tree th:first-child {
  padding-left: 0;
}

.tree th:last-child {
  border-right: 0;
}

.tree tbody::before {
  content: "";
  display: table-row;
  height: 4px;
}

.tree td {
  height: 19px;
  padding: 0 0 0 6px;
  line-height: 17px;
  color: #000;
  border-right: 1px solid #dadada;
}

.tree td:first-child {
  padding: 0;
}

.tree td:last-child {
  border-right: 0;
}

.node {
  position: relative;
  height: 19px;
  display: flex;
  align-items: center;
  white-space: nowrap;
}

.node svg {
  margin-right: 5px;
}

.root {
  padding-left: 4px;
}

.line {
  width: 1px;
  height: 19px;
  margin-left: 24px;
  border-left: 1px dotted #333;
}

.line.sub {
  margin-left: 15px;
}

.line.end {
  height: 10px;
  align-self: flex-start;
}

.dash {
  width: 12px;
  border-top: 1px dotted #333;
  margin-right: 2px;
}

.toggle {
  position: relative;
  width: 9px;
  height: 9px;
  border: 1px solid #888;
  background: linear-gradient(#1e395b, #1e395b) center / 5px 1px no-repeat, #f4f4f4;
}

.branch .toggle {
  margin-left: -5px;
}

.root .dash,
.branch .dash {
  width: 6px;
}

.scroll-y,
.scroll-x {
  display: flex;
  align-items: center;
  background: #f3f3f3;
}

.scroll-y {
  flex-direction: column;
  padding: 6px 0;
}

.scroll-y .thumb {
  flex: 1;
  width: 14px;
  margin: 6px 0 60px;
  border: 1px solid #979797;
  background: linear-gradient(90deg, #f6f6f6, #d8dce2);
}

.scroll-y .tri.down {
  margin-top: auto;
}

.scroll-x {
  padding: 0 5px;
}

.scroll-x .thumb {
  width: 279px;
  height: 15px;
  margin: 0 auto 0 5px;
  border: 1px solid #979797;
  border-radius: 1px;
  background: repeating-linear-gradient(90deg, #777 0 1px, transparent 1px 2px) center / 7px 9px no-repeat, linear-gradient(#f6f6f6, #d8dce2);
}

.tri {
  border: 4px solid transparent;
}

.tri.up {
  border-bottom: 5px solid #444;
  border-top: 0;
}

.tri.down {
  border-top: 5px solid #444;
  border-bottom: 0;
}

.tri.prev {
  border-right: 5px solid #444;
  border-left: 0;
}

.tri.next {
  border-left: 5px solid #444;
  border-right: 0;
}

.off {
  width: 15px;
  background: #f1f1f1;
  border-left: 1px solid #e2e2e2;
}

.off .tri.up {
  border-bottom-color: #8a8a8a;
}

.off .tri.down {
  border-top-color: #8a8a8a;
}

/* Details */
.details {
  flex: 1;
  min-width: 0;
  display: flex;
  flex-direction: column;
  border-left: 6px solid #97a4b4;
}

.detail-tabs {
  flex: none;
  height: 26px;
  display: flex;
  align-items: center;
  justify-content: space-between;
  padding-right: 5px;
  background: linear-gradient(#bfd2ea, #d9e6f5);
  border-bottom: 1px solid #a9bbd3;
}

/* The white notch marks the selected tab */
.detail-tabs button {
  align-self: stretch;
  width: 69px;
  padding-bottom: 4px;
  font-size: 13px;
  font-weight: bold;
  color: #fff;
  border: 1px solid #17479b;
  background:
    conic-gradient(from 135deg at 50% 0, #fff 90deg, transparent 0) center bottom / 12px 6px no-repeat,
    radial-gradient(ellipse at bottom, #3f8ae2, #2361bd);
}

.detail-tabs .drop {
  border-top-color: #000;
}

.detail-body {
  flex: 1;
  min-height: 0;
  display: flex;
}

.params {
  width: 437px;
  flex: none;
  display: flex;
  flex-direction: column;
}

.notes {
  flex: 1;
  display: flex;
  flex-direction: column;
}

.slant {
  position: relative;
  flex: none;
  height: 27px;
  padding: 0 0 0 5px;
  background: linear-gradient(#c3d9fa, #e6f0ff 22px, #33548f 22px, #33548f 23px, #8eb1e7 23px);
}

.slant svg {
  width: 96px;
  height: 24px;
}

.slant b {
  position: absolute;
  top: 4px;
  left: 36px;
  font-size: 13px;
  color: #000;
}

.sheet {
  flex: 1;
  background: #fff;
  border: 1px solid #8098bd;
  border-bottom: 3px solid #7c9bca;
}

.sheet .mark {
  background: #e6eef8;
}

.sheet td {
  border-color: #d5dfec;
}

.thin {
  width: 6px;
}

.note-grid {
  flex: 1;
  display: grid;
  grid-template-columns: 198px 1fr;
  border-right: 2px solid #5f86bf;
  border-bottom: 3px solid #7c9bca;
}

.note {
  display: flex;
  flex-direction: column;
  border-left: 1px solid #6d8fbd;
}

.note label {
  height: 25px;
  padding-left: 2px;
  line-height: 23px;
  color: #1f3a7a;
  border-bottom: 1px solid #6d8fbd;
  background: linear-gradient(#f2f8fe, #dce7f4);
}

.note-body {
  flex: 1;
  display: flex;
}

.note textarea {
  flex: 1;
  min-width: 0;
  padding: 0 2px;
  font: inherit;
  color: #000;
  border: 0;
  resize: none;
  background: #eee;
}

/* Status bar */
.statusbar {
  position: relative;
  flex: none;
  height: 32px;
  display: flex;
  align-items: center;
  padding: 0 28px 0 6px;
  color: #1f2f5e;
  white-space: nowrap;
  border: 1px solid #5a6c88;
  background: linear-gradient(#f1f7fe, #dbe6f3);
}

.center-name {
  margin: 0 10px 0 9px;
}

.user {
  margin: 0 46px 0 8px;
}

.version {
  position: absolute;
  left: 0;
  right: 206px;
  text-align: center;
}

.version .lat {
  white-space: pre;
}

.clock {
  margin-left: auto;
}

/* Windows taskbar */
.taskbar {
  flex: none;
  height: 40px;
  display: flex;
  align-items: center;
  gap: 4px;
  padding-left: 7px;
  background:
    linear-gradient(rgba(255, 255, 255, .25), transparent 2px),
    linear-gradient(90deg, #12294a, #1a3c6c 300px, #0a2d5e 720px, #07295c 1400px, #17427e 1620px, #0c2342);
}

.orb {
  width: 40px;
  margin-right: 9px;
}

.task {
  width: 58px;
  height: 38px;
  display: flex;
  align-items: center;
  justify-content: center;
  border: 1px solid #8296b5;
  border-radius: 3px;
  background: linear-gradient(150deg, #8796b0, #41577f 45%, #23406f 50%, #2c4c7e);
}

.task svg {
  width: 36px;
  height: 34px;
}

.small svg {
  width: 32px;
  height: 26px;
}

.gold {
  background: linear-gradient(#f6d35d, #f0b23c 50%, #cf6f28);
}

.light {
  background: linear-gradient(150deg, #dde3ec, #95a2b7 50%, #8593aa);
}

.stack {
  width: 50px;
  margin-right: 8px;
  box-shadow: 4px 0 0 -1px #3c5276, 5px 0 0 -1px #8296b5;
}

.tray {
  flex: 1;
  align-self: stretch;
  display: flex;
  justify-content: flex-end;
  align-items: center;
  gap: 7px;
  color: #fff;
}

.tray .up {
  border-bottom-color: #fff;
  margin-right: 7px;
}

.tray svg:nth-of-type(1) {
  margin-right: 5px;
}

.tray-clock {
  width: 78px;
  text-align: center;
  line-height: 18px;
  font-family: "Noto Sans", sans-serif;
}

.peek {
  width: 14px;
  height: 38px;
  margin-left: -7px;
  border: 1px solid #7d90ab;
  background: linear-gradient(150deg, #7588a5, #1b3355 50%);
}

.ime {
  position: absolute;
  right: 100px;
  bottom: 49px;
  width: 79px;
  height: 26px;
  display: flex;
  align-items: center;
  gap: 7px;
  padding: 0 5px;
  border-top: 1px solid #36383d;
  background: linear-gradient(#9b9ea4, #4b4f57 50%, #5a5e66);
}

.grip {
  width: 8px;
  height: 16px;
  background: radial-gradient(circle, #111 1px, transparent 1px) 0 0 / 3px 4px;
}

.ime-menu {
  display: flex;
  flex-direction: column;
  align-items: center;
  gap: 6px;
}

.ime-menu i:first-child {
  width: 5px;
  height: 2px;
  background: #fff;
}

.ime-menu .caret {
  border-top-color: #fff;
}

/* Check dialog */
.dialog {
  position: absolute;
  left: 864px;
  top: 403px;
  width: 846px;
  height: 535px;
  display: flex;
  flex-direction: column;
  padding: 0 6px 6px 7px;
  color: #000;
  border: 1px solid #15233c;
  border-radius: 7px;
  background:
    radial-gradient(ellipse 26px 10px at 104px 20px, rgba(50, 60, 90, .4), transparent) no-repeat,
    radial-gradient(ellipse 16px 9px at 188px 20px, rgba(50, 60, 90, .45), transparent) no-repeat,
    radial-gradient(ellipse 12px 9px at 340px 20px, rgba(50, 60, 90, .4), transparent) no-repeat,
    radial-gradient(ellipse 7px 9px at 393px 20px, rgba(50, 60, 90, .45), transparent) no-repeat,
    linear-gradient(rgba(255, 255, 255, .25), transparent 14px) no-repeat,
    linear-gradient(90deg, #bccbe3, #92aed6 130px, #95b1d9 300px, #8fadd9 455px, #5577b0 470px, #93afd8 485px, #a9c0e2 560px, #8aa7d2 670px, #93aed6 700px, #b4c8e4) top / 100% 60px no-repeat,
    #9cb6dd;
  box-shadow: inset 0 0 0 1px #dfeaf8, 2px 3px 12px 3px rgba(0, 0, 0, .65);
}

.dialog-bar {
  flex: none;
  height: 28px;
  display: flex;
  align-items: flex-start;
  padding-left: 1px;
  gap: 6px;
}

.dialog-bar > svg {
  margin-top: 7px;
}

.dialog-bar > span {
  margin-top: 6px;
  font-family: "Noto Sans", "Noto Sans CJK SC", sans-serif;
}

.dialog-buttons {
  display: flex;
  height: 19px;
  margin-left: auto;
  border: 1px solid #2c3c58;
  border-top: 0;
  border-radius: 0 0 4px 4px;
  overflow: hidden;
  background: linear-gradient(#d8e0ec, #97a9c6 50%, #a8bad6);
}

.dialog-buttons button {
  width: 28px;
  display: flex;
  align-items: center;
  justify-content: center;
  border-right: 1px solid #43567a;
}

.dialog-buttons .close {
  width: 46px;
  border: 0;
  background: linear-gradient(#e2a193, #c9513f 50%, #b3311f 51%, #cf6a50);
}

.dialog-client {
  flex: 1;
  display: flex;
  flex-direction: column;
  padding: 38px 25px 16px 11px;
  border: 1px solid #3d4f6e;
  background: radial-gradient(circle, #aaa 1px, transparent 1px) right bottom / 4px 4px no-repeat, #f0f0f0;
}

.check-area {
  flex: 1;
  border: 1px solid #000;
  background: #ababab;
}

.checks {
  width: 781px;
}

.checks th {
  height: 20px;
  padding: 0 6px;
  font-family: "Noto Sans", "Noto Sans CJK SC", sans-serif;
  font-weight: normal;
  text-align: left;
  border-right: 1px solid #e2e4e7;
  border-bottom: 1px solid #a0a0a0;
  background: linear-gradient(#fff 50%, #f3f4f6 50%);
}

.checks td {
  height: 23px;
  padding: 1px 1px 0;
  white-space: nowrap;
  color: #5b8bcb;
  border-right: 1px solid #a0a0a0;
  border-bottom: 1px solid #a0a0a0;
  background: #fff;
}

.checks .head {
  padding-left: 7px;
  border-bottom-color: #e2e4e7;
  background: linear-gradient(90deg, #fff 25%, #f3f4f6 25%);
}

.checks .sel {
  color: #fff;
  background: #3399ff;
}

.checks td:last-child {
  padding-top: 0;
}

.checks input {
  appearance: none;
  display: block;
  width: 13px;
  height: 13px;
  margin: 0 auto;
  border: 1px solid #8e8f8f;
  background: linear-gradient(135deg, #c9cdd2, #f6f6f6);
  box-shadow: inset 0 0 0 1px #f4f4f4;
}

.dialog-actions {
  display: flex;
  justify-content: flex-end;
  gap: 8px;
  padding-top: 8px;
}

.dialog-actions button {
  width: 86px;
  height: 35px;
  border: 1px solid #707070;
  border-radius: 3px;
  background: linear-gradient(#f2f2f2, #ebebeb 50%, #dddddd 50%, #cfcfcf);
  box-shadow: inset 0 0 0 1px #fcfcfc;
}

.pointer {
  position: absolute;
  left: 286px;
  top: 192px;
  width: 40px;
  height: 290px;
}
```
